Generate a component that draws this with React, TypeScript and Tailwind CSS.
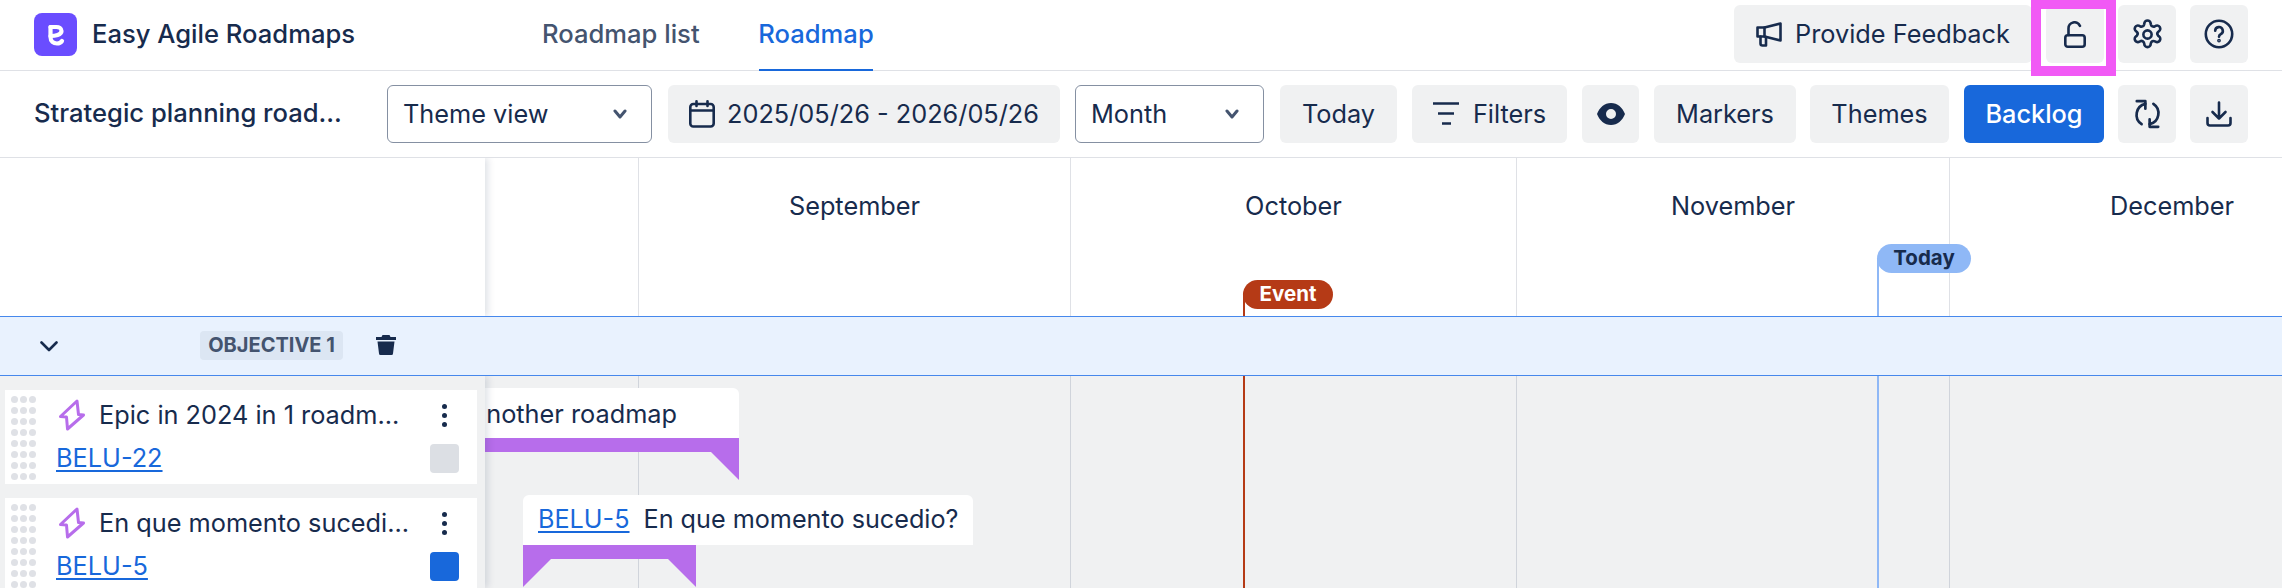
import React from "react";

const ink = "#172B4D";

function Btn({ className = "", children }: { className?: string; children: React.ReactNode }) {
  return (
    <div className={`h-[58px] shrink-0 rounded-[6px] bg-[#F0F1F2] flex items-center justify-center text-[25.3px] text-[#172B4D] whitespace-nowrap ${className}`}>
      {children}
    </div>
  );
}

function Chevron({ className = "" }: { className?: string }) {
  return (
    <svg width="14" height="10" viewBox="0 0 14 10" className={className} fill="none" stroke="#44546F" strokeWidth="3" strokeLinecap="round" strokeLinejoin="round">
      <path d="M2 2 7 8l5-6" />
    </svg>
  );
}

function Select({ label, className = "" }: { label: string; className?: string }) {
  return (
    <div className={`h-[58px] shrink-0 rounded-[6px] border border-[#8590A2] bg-white flex items-center justify-between pl-[15px] pr-[24px] text-[25.3px] text-[#172B4D] ${className}`}>
      <span>{label}</span>
      <Chevron />
    </div>
  );
}

function Megaphone() {
  return (
    <svg width="26" height="26" viewBox="0 0 26 26" fill="none" stroke={ink} strokeWidth="2.6" strokeLinejoin="round" strokeLinecap="round">
      <path d="M1.500 6.500h7L24.500 2.500v17L8.500 15.500h-7z" />
      <path d="M8.500 6.500v9" />
      <path d="M4.500 15.500v7a2 2 0 0 0 2 2H10v-8.500" />
    </svg>
  );
}

function Unlock() {
  return (
    <svg width="22" height="27" viewBox="0 0 22 27" fill="none" stroke={ink} strokeWidth="2.6" strokeLinecap="round" strokeLinejoin="round">
      <rect x="1.3" y="14.3" width="19.4" height="11.4" rx="2.5" />
      <path d="M4.500 14V7.500a6 6 0 0 1 11.500-2.600" />
    </svg>
  );
}

function Gear() {
  return (
    <svg width="33" height="33" viewBox="0 0 24 24" fill="none" stroke={ink} strokeWidth="1.9" strokeLinecap="round" strokeLinejoin="round">
      <path d="M9.670 4.140a2 2 0 0 1 4.660 0l.1.560a2 2 0 0 0 2.900 1.370l.5-.270a2 2 0 0 1 2.330 3.980l-.420.370a2 2 0 0 0 0 2.700l.420.370a2 2 0 0 1-2.330 3.980l-.5-.270a2 2 0 0 0-2.900 1.370l-.1.560a2 2 0 0 1-4.660 0l-.1-.560a2 2 0 0 0-2.900-1.370l-.5.270a2 2 0 0 1-2.330-3.980l.420-.370a2 2 0 0 0 0-2.700l-.420-.370a2 2 0 0 1 2.330-3.980l.5.270a2 2 0 0 0 2.900-1.370z" />
      <circle cx="12" cy="12" r="3" />
    </svg>
  );
}

function Help() {
  return (
    <svg width="30" height="30" viewBox="0 0 30 30" fill="none" stroke={ink} strokeWidth="2.6" strokeLinecap="round" strokeLinejoin="round">
      <circle cx="15" cy="15" r="13.2" />
      <path d="M11.200 11.800a3.800 3.800 0 1 1 5.600 3.400c-1.200.7-1.800 1.300-1.800 2.500" />
      <circle cx="15" cy="21.600" r="0.6" fill={ink} />
    </svg>
  );
}

function Calendar() {
  return (
    <svg width="26" height="28" viewBox="0 0 26 28" fill="none" stroke={ink} strokeWidth="2.6" strokeLinecap="round" strokeLinejoin="round">
      <rect x="1.3" y="4" width="23.4" height="22.500" rx="3" />
      <path d="M1.500 10.500h23M7.500 1.300V6M18.500 1.300V6" />
    </svg>
  );
}

function FilterIcon() {
  return (
    <svg width="26" height="23" viewBox="0 0 26 23" fill="none" stroke={ink} strokeWidth="2.6">
      <path d="M0 1.500h26M5 11.500h16M9 21.500h9" />
    </svg>
  );
}

function Eye() {
  return (
    <svg width="28" height="22" viewBox="0 0 28 22">
      <path
        fillRule="evenodd"
        fill={ink}
        d="M14 0C7.500 0 2.500 4.500 0 11c2.500 6.500 7.500 11 14 11s11.500-4.500 14-11C25.500 4.500 20.500 0 14 0zm0 6a5 5 0 1 1 0 10 5 5 0 0 1 0-10z"
      />
    </svg>
  );
}

function Refresh() {
  return (
    <svg width="29" height="30" viewBox="0 0 27 28" fill="none" stroke={ink} strokeWidth="2.5" strokeLinecap="round" strokeLinejoin="round">
      <path d="M11.500 4.500A10.500 10.500 0 0 0 8 23.500" />
      <path d="M15.500 23.500A10.500 10.500 0 0 0 19 4.500" />
      <path d="M3.500 2h8v7" />
      <path d="M23.500 26h-8v-7" />
    </svg>
  );
}

function Download() {
  return (
    <svg width="26" height="26" viewBox="0 0 26 26" fill="none" stroke={ink} strokeWidth="2.6" strokeLinecap="round" strokeLinejoin="round">
      <path d="M13 1.500v16M6.500 11 13 17.500 19.500 11" />
      <path d="M1.500 17v5a2.500 2.500 0 0 0 2.500 2.500h18a2.500 2.500 0 0 0 2.500-2.500v-5" />
    </svg>
  );
}

function Bolt() {
  return (
    <svg width="26" height="32" viewBox="0 0 26 32" fill="none" stroke="#B76DEB" strokeWidth="3" strokeLinejoin="round">
      <path d="M18 2 19.500 15.500 24.500 16 8.500 30 7.500 18 1.500 17.500z" />
    </svg>
  );
}

function Dots() {
  return (
    <div className="grid grid-cols-[7px_7px_7px] gap-x-[2px] gap-y-[4px] w-[25px] pt-[6px] ml-[6px] shrink-0 h-fit">
      {Array.from({ length: 24 }).map((_, i) => (
        <span key={i} className="w-[7px] h-[7px] rounded-full bg-[#DFE1E6]" />
      ))}
    </div>
  );
}

function Kebab() {
  return (
    <div className="flex flex-col gap-[4px] w-[6px] items-center">
      <span className="w-[5px] h-[5px] rounded-full bg-[#172B4D]" />
      <span className="w-[5px] h-[5px] rounded-full bg-[#172B4D]" />
      <span className="w-[5px] h-[5px] rounded-full bg-[#172B4D]" />
    </div>
  );
}

function Card({ title, id, swatch }: { title: string; id: string; swatch: string }) {
  return (
    <div className="h-[94px] w-[472px] shrink-0 bg-white flex overflow-hidden">
      <Dots />
      <div className="flex-1 ml-[20px] pr-[18px] pt-[9px]">
        <div className="flex items-center h-[32px] ml-[3px]">
          <Bolt />
          <span className="ml-[14px] text-[25.3px] text-[#172B4D] whitespace-nowrap flex-1">{title}</span>
          <span className="mr-[12px]"><Kebab /></span>
        </div>
        <div className="flex items-center justify-between mt-[12px] h-[30px]">
          <span className="text-[25.3px] text-[#1868DB] underline underline-offset-[3px]">{id}</span>
          <span className={`w-[29px] h-[29px] rounded-[4px] ${swatch}`} />
        </div>
      </div>
    </div>
  );
}

function Month({ label, className }: { label: string; className: string }) {
  return (
    <div className={`h-full shrink-0 border-r border-[#DFE1E6] flex justify-center pt-[29px] text-[25.3px] text-[#172B4D] ${className}`}>
      {label}
    </div>
  );
}

export default function App() {
  return (
    <div className="relative w-[2282px] h-[588px] overflow-hidden bg-white flex flex-col [font-family:Inter,sans-serif]">
      {/* top bar */}
      <header className="relative h-[71px] shrink-0 border-b border-[#DFE1E6] flex items-center pl-[34px]">
        <div className="w-[43px] h-[43px] rounded-[8px] bg-[#6A4DFF] flex items-center justify-center -mt-[1px]">
          <svg width="18" height="22" viewBox="0 0 18 22" fill="none" stroke="#fff" strokeWidth="4.2" strokeLinecap="round" strokeLinejoin="round">
            <path d="M3.500 3V13C3.500 17.500 6.500 19.500 10 19.500 12 19.500 14 18.500 15 17" />
            <path d="M3.500 12C8 12 14.500 11 14.500 7 14.500 4 12 3 9.500 3H3.500" />
          </svg>
        </div>
        <div className="ml-[15px] text-[25.6px] font-medium text-[#172B4D] w-[450px] -mt-[1px] whitespace-nowrap">Easy Agile Roadmaps</div>
        <nav className="flex h-full text-[25.6px] font-medium">
          <div className="text-[#44546F] w-[217px] flex items-center -mt-[1px] whitespace-nowrap">Roadmap list</div>
          <div className="relative text-[#1868DB] flex items-center -mt-[1px] w-[114px] justify-center">
            Roadmap
            <span className="absolute left-0 right-0 bottom-[-1px] h-[2px] bg-[#1868DB]" />
          </div>
        </nav>
        <div className="ml-auto mr-[34px] flex gap-[14px] -mt-[2px]">
          <Btn className="w-[298px] gap-[13px]"><Megaphone /><span>Provide Feedback</span></Btn>
          <Btn className="w-[58px]"><Unlock /></Btn>
          <Btn className="w-[58px]"><Gear /></Btn>
          <Btn className="w-[58px]"><Help /></Btn>
        </div>
      </header>

      {/* toolbar */}
      <div className="h-[87px] shrink-0 border-b border-[#DFE1E6] flex items-center pl-[34px] pb-[1px]">
        <div className="w-[353px] shrink-0 text-[25.6px] font-medium text-[#172B4D] whitespace-nowrap">Strategic planning road...</div>
        <Select label="Theme view" className="w-[265px]" />
        <Btn className="w-[392px] ml-[16px] gap-[12px]"><Calendar /><span>2025/05/26 - 2026/05/26</span></Btn>
        <Select label="Month" className="w-[189px] ml-[15px]" />
        <Btn className="w-[117px] ml-[16px]">Today</Btn>
        <Btn className="w-[155px] ml-[15px] gap-[14px]"><FilterIcon /><span>Filters</span></Btn>
        <Btn className="w-[57px] ml-[15px]"><Eye /></Btn>
        <Btn className="w-[142px] ml-[15px]">Markers</Btn>
        <Btn className="w-[139px] ml-[14px]">Themes</Btn>
        <Btn className="w-[140px] ml-[15px] !bg-[#1868DB] !text-white font-medium">Backlog</Btn>
        <Btn className="w-[58px] ml-[14px]"><Refresh /></Btn>
        <Btn className="w-[58px] ml-[14px]"><Download /></Btn>
      </div>

      {/* timeline */}
      <div className="relative flex-1 flex flex-col overflow-hidden">
        <div className="h-[158px] shrink-0 flex overflow-hidden">
          <div className="w-[485px] shrink-0 bg-white shadow-[3px_0_7px_rgba(9,30,66,0.13)] z-10" />
          <div className="w-[154px] shrink-0 h-full border-r border-[#DFE1E6]" />
          <Month label="September" className="w-[432px]" />
          <Month label="October" className="w-[446px]" />
          <Month label="November" className="w-[433px]" />
          <Month label="December" className="w-[444px] border-r-0" />
        </div>

        <div className="relative z-20 h-[60px] shrink-0 bg-[#E9F2FE] border-y border-[#4688EC] flex items-center">
          <svg width="18" height="11" viewBox="0 0 18 11" className="ml-[40px]" fill="none" stroke={ink} strokeWidth="2.6" strokeLinecap="round" strokeLinejoin="round">
            <path d="M1.500 1.500 9 9l7.500-7.500" />
          </svg>
          <div className="ml-[142px] h-[29px] w-[143px] rounded-[4px] bg-[#DCE6F3] flex items-center justify-center text-[20px] font-bold text-[#44546F] whitespace-nowrap -mt-[2px]">OBJECTIVE 1</div>
          <svg width="20" height="20" viewBox="0 0 20 20" className="ml-[33px] -mt-[2px]" fill={ink}>
            <path d="M6.500 0h7l1 2H20v3H0V2h5.500z" />
            <path d="M1.500 6.500h17L17 18.500a1.500 1.500 0 0 1-1.500 1.500h-11A1.500 1.500 0 0 1 3 18.500z" />
          </svg>
        </div>

        <div className="flex-1 flex bg-[#F0F1F2] min-h-0">
          <div className="relative z-10 w-[485px] shrink-0 bg-[#F0F1F2] shadow-[3px_0_7px_rgba(9,30,66,0.13)] pl-[5px] pt-[14px] flex flex-col gap-[14px] overflow-hidden">
            <Card title="Epic in 2024 in 1 roadm..." id="BELU-22" swatch="bg-[#DCDFE4]" />
            <Card title="En que momento sucedi..." id="BELU-5" swatch="bg-[#1868DB]" />
          </div>
          <div className="relative flex-1 overflow-hidden">
            <div className="absolute inset-0 flex">
              <div className="w-[154px] shrink-0 border-r border-[#D0D4DB]" />
              <div className="w-[432px] shrink-0 border-r border-[#D0D4DB]" />
              <div className="w-[446px] shrink-0 border-r border-[#D0D4DB]" />
              <div className="w-[433px] shrink-0 border-r border-[#D0D4DB]" />
            </div>

            {/* bar 1 */}
            <div className="absolute left-[-100px] top-[12px] w-[354px]">
              <div className="h-[50px] bg-white rounded-tr-[6px] flex items-center justify-end pr-[62px] pt-[1px] text-[25.3px] text-[#172B4D] whitespace-nowrap">another roadmap</div>
              <svg width="354" height="42" viewBox="0 0 354 42" className="block">
                <polygon points="0,0 354,0 354,42 326,14 0,14" fill="#B76DEB" />
              </svg>
            </div>

            {/* bar 2 */}
            <div className="absolute left-[38px] top-[119px] w-[450px]">
              <div className="h-[50px] bg-white rounded-t-[6px] flex items-center pl-[15px] text-[25.2px] text-[#172B4D] whitespace-nowrap">
                <span className="text-[#1868DB] underline underline-offset-[3px]">BELU-5</span>
                <span className="ml-[14px]">En que momento sucedio?</span>
              </div>
              <svg width="173" height="42" viewBox="0 0 173 42" className="block">
                <polygon points="0,0 173,0 173,42 145,14 28,14 0,42" fill="#B76DEB" />
              </svg>
            </div>
          </div>
        </div>

        {/* markers */}
        <div className="absolute z-30 left-[1243px] top-[122px] w-[90px] h-[29px] rounded-full bg-[#B53A16] text-white text-[20.5px] font-bold flex items-center justify-center">Event</div>
        <div className="absolute z-10 left-[1243px] top-[135px] w-[2px] bottom-0 bg-[#B53A16]" />
        <div className="absolute z-30 left-[1877px] top-[86px] w-[94px] h-[29px] rounded-full bg-[#8FB8F6] text-[#172B4D] text-[20.5px] font-bold flex items-center justify-center">Today</div>
        <div className="absolute z-10 left-[1877px] top-[100px] w-[2px] bottom-0 bg-[#8FB8F6]" />
      </div>

      {/* highlight round the lock button */}
      <div className="absolute left-[2031px] top-0 w-[85px] h-[76px] border-x-[10px] border-b-[10px] border-t-[9px] border-[#F159F5]" />
    </div>
  );
}
